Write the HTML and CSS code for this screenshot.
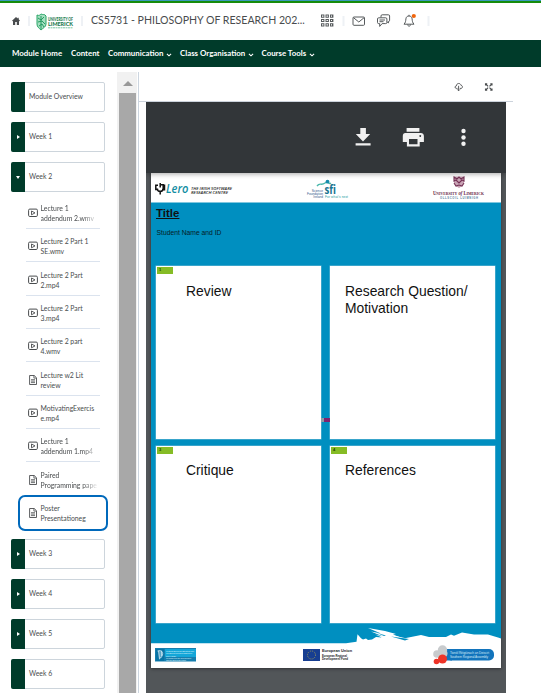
FILE: index.html
```html
<!DOCTYPE html>
<html lang="en">
<head>
<meta charset="utf-8">
<title>CS5731 - Philosophy of Research</title>
<link rel="stylesheet" href="styles.css">
</head>
<body>
<svg class="defs" width="0" height="0" aria-hidden="true">
  <symbol id="video" viewBox="0 0 10 10"><rect x=".6" y="1.1" width="8.8" height="7.4" rx="1.2" fill="none" stroke="#494c4e" stroke-width="1"/><path d="M3.5 3v3.8L7 4.9z" fill="none" stroke="#494c4e" stroke-width=".9"/></symbol>
  <symbol id="doc" viewBox="0 0 10 10"><path d="M1.6.5h4.6l2.3 2.3v6.7H1.6z" fill="none" stroke="#494c4e" stroke-width=".9"/><path d="M5.900.5v2.600h2.600M3 4.700h4M3 6.100h4M3 7.600h4" fill="none" stroke="#494c4e" stroke-width=".8"/></symbol>
  <symbol id="chev" viewBox="0 0 6 4"><path d="M.9.8 3 2.8 5.1.8" fill="none" stroke="#fff" stroke-width="1.1"/></symbol>
</svg>
<header class="topbar">
  <svg class="home" viewBox="0 0 8 8" width="8" height="8"><path d="M4 0 5.700 1.500V.8h1v1.500L8 3.700l-.6.5L7 3.900V8H4.800V5H3.200v3H1V3.900l-.4.3L0 3.700z" fill="#494c4e"/></svg>
  <i class="sep s1"></i>
  <svg class="crest" viewBox="0 0 38 18" width="38" height="18">
    <path d="M1 2c2 1 3 0 4-1 2 1 3 0 4 1l1 1v8c0 3-3 4-5 6-2-2-4-3-4-6z" fill="#a5dfc0" stroke="#29a566" stroke-width="1"/>
    <path d="M2 5l3 2 3-3M2 9l4-1 3 3M3 13l3-2 2 3M5 3v13" fill="none" stroke="#179457" stroke-width=".9"/>
    <text class="crest-text" x="12" y="7.500" font-size="4.600" textLength="25" lengthAdjust="spacingAndGlyphs">UNIVERSITY OF</text>
    <text class="crest-text" x="12" y="13.200" font-size="6.400" textLength="25" lengthAdjust="spacingAndGlyphs">LIMERICK</text>
    <path d="M12 14.800h25" stroke="#5bb98a" stroke-width=".8" stroke-dasharray="2 .5"/>
  </svg>
  <i class="sep s2"></i>
  <h1 class="course">CS5731 - PHILOSOPHY OF RESEARCH 202...</h1>
  <svg class="tools" viewBox="0 0 118 20" width="118" height="20" fill="none" stroke="#565a5c">
    <path d="M1 5.200h12.500M1 9.500h12.500M1 13.800h12.500" stroke-width="3.200" stroke-dasharray="3.400 1.100"/>
    <path d="M2 5.200h10M2 9.500h10M2 13.800h10" stroke="#fff" stroke-width="1.200" stroke-dasharray="1.400 3.100"/>
    <path d="M23.500 5v10M108.500 5v10" stroke="#eef1f5" stroke-width="2"/>
    <rect x="33" y="6" width="11.500" height="8.300" rx="1"/><path d="m33.500 6.700 5.300 4.300 5.300-4.300"/>
    <path d="M61 6.500V5c0-.8.4-1.200 1.200-1.200h6.200c.8 0 1.200.4 1.200 1.200v4.300c0 .8-.4 1.200-1.200 1.200v1.600l-1.400-1.400"/>
    <path d="M58.700 6.800h7c.8 0 1.200.4 1.200 1.200v3.400c0 .8-.4 1.200-1.200 1.200h-3.600l-2.400 2.800v-2.800h-1c-.8 0-1.200-.4-1.200-1.200V8c0-.8.4-1.200 1.200-1.200zM59.500 9h5.500M59.500 10.700h4"/>
    <path d="M84 13.200c1.600-1.600 1.700-3.400 1.900-5.300.2-1.800 1.200-2.900 3.100-2.900s2.900 1.100 3.100 2.900c.2 1.900.3 3.700 1.900 5.300zM87.700 13.500c0 2.200 2.800 2.200 2.800 0M89 5V3.800"/>
    <circle cx="93.800" cy="5" r="2.100" fill="#f0650c" stroke="none"/>
  </svg>
</header>
<nav class="nav">
  <a class="n1">Module Home</a><a class="n2">Content</a>
  <a class="n3">Communication</a><svg class="c1" width="6" height="4"><use href="#chev"/></svg>
  <a class="n4">Class Organisation</a><svg class="c2" width="6" height="4"><use href="#chev"/></svg>
  <a class="n5">Course Tools</a><svg class="c3" width="6" height="4"><use href="#chev"/></svg>
</nav>
<div class="layout">
  <aside class="side">
    <div class="mod"><b></b><span>Module Overview</span></div>
    <div class="mod"><b><i class="tri"></i></b><span>Week 1</span></div>
    <div class="mod"><b><i class="tri down"></i></b><span>Week 2</span></div>
    <ul class="topics">
      <li><svg width="10" height="10"><use href="#video"/></svg><span class="fade">Lecture 1<br>addendum 2.wmv</span></li>
      <li><svg width="10" height="10"><use href="#video"/></svg><span>Lecture 2 Part 1<br>SE.wmv</span></li>
      <li><svg width="10" height="10"><use href="#video"/></svg><span>Lecture 2 Part<br>2.mp4</span></li>
      <li><svg width="10" height="10"><use href="#video"/></svg><span>Lecture 2 Part<br>3.mp4</span></li>
      <li><svg width="10" height="10"><use href="#video"/></svg><span>Lecture 2 part<br>4.wmv</span></li>
      <li><svg width="10" height="10"><use href="#doc"/></svg><span>Lecture w2 Lit<br>review</span></li>
      <li><svg width="10" height="10"><use href="#video"/></svg><span>MotivatingExercis<br>e.mp4</span></li>
      <li><svg width="10" height="10"><use href="#video"/></svg><span class="fade">Lecture 1<br>addendum 1.mp4</span></li>
      <li class="last"><svg width="10" height="10"><use href="#doc"/></svg><span class="fade">Paired<br>Programming pape</span></li>
    </ul>
    <div class="selected"><svg width="10" height="10"><use href="#doc"/></svg><span>Poster<br>Presentationeg</span></div>
    <div class="mod"><b><i class="tri"></i></b><span>Week 3</span></div>
    <div class="mod"><b><i class="tri"></i></b><span>Week 4</span></div>
    <div class="mod"><b><i class="tri"></i></b><span>Week 5</span></div>
    <div class="mod"><b></b><span>Week 6</span></div>
  </aside>
  <div class="scroll"><i class="up"></i><div class="thumb"></div></div>
  <main class="content">
    <div class="actions">
      <svg viewBox="0 0 40 10" width="40" height="10" fill="none" stroke="#494c4e" stroke-width=".9">
        <path d="M3.500 6.400H2.400C.6 6.400.6 3.900 2.400 3.900 2.400.9 6.500.6 7 3.400c2 .1 1.800 3 0 3H5.800M4.600 3.800v4.800M3.200 7.400l1.400 1.400L6 7.400"/>
        <path d="M31.500 3.500V1.800h1.700M31.800 2l2.300 2.300M36.300 1.800H38v1.700M37.800 2l-2.300 2.300M31.500 6.500v1.700h1.700M31.800 8l2.300-2.300M38 6.500v1.700h-1.700M37.800 8l-2.300-2.300" stroke-width="1.100"/>
      </svg>
    </div>
    <section class="viewer">
      <div class="pdfbar">
        <svg viewBox="0 0 112 24" width="112" height="24" fill="#f1f1f1">
          <path d="M5.300 3h5.600v5.900h4.300L8 16.400.8 8.900h4.500zM.6 18.200h15v2.200H.6z"/>
          <path d="M51.600 3h12.800v3.800H51.600zM50.300 7.900h15.500c1.800 0 3.100 1.200 3.100 3v6.200h-4.200v4.400H51.900v-4.400h-4.100v-6.200c0-1.800 1-3 2.500-3zM54 13.900v5.400h8.500v-5.400zM65.200 10.100a.9.900 0 1 0 .1 0z" fill-rule="evenodd"/>
          <circle cx="108.500" cy="6" r="2.200"/><circle cx="108.500" cy="12.500" r="2.200"/><circle cx="108.500" cy="18.800" r="2.200"/>
        </svg>
      </div>
      <article class="page">
        <div class="logos">
          <svg viewBox="0 0 350 29" width="350" height="29">
            <path d="M8.500 11.800h3.700v3.500c0 2.200-1.300 3.200-3 3.200s-2.900-1-2.900-3M7 12.200H4.800v4.300h2.500M11.500 12.200h2v4.500h-2.500M9.200 10v4.500M9.200 17.500v4" fill="none" stroke="#111" stroke-width="1.500"/>
            <text x="15" y="20" class="lero" textLength="22.500" lengthAdjust="spacingAndGlyphs">Lero</text>
            <text x="40" y="16.600" class="cap" font-size="4" textLength="41" lengthAdjust="spacingAndGlyphs">THE IRISH SOFTWARE</text>
            <text x="40" y="20.600" class="cap" font-size="4" textLength="37" lengthAdjust="spacingAndGlyphs">RESEARCH CENTRE</text>
            <path d="M166 13c3-4 4 0 8-3s3 2 6 0" fill="none" stroke="#4ab8ac" stroke-width="1.400"/><circle cx="176.500" cy="8.700" r="1.900" fill="#168cab"/>
            <text x="173.500" y="21" class="sfi" textLength="11.500" lengthAdjust="spacingAndGlyphs">sfi</text>
            <text x="172" y="19" class="micro" text-anchor="end" fill="#30568b">Science</text>
            <text x="172" y="22" class="micro" text-anchor="end" fill="#30568b">Foundation</text>
            <text x="172" y="25" class="micro" text-anchor="end" fill="#30568b">Ireland</text>
            <text x="174" y="25" class="micro" fill="#229ba0" textLength="23">For what's next</text>
            <path d="M303 3.500h10v6c0 3-5 5.500-5 5.500s-5-2.500-5-5.500z" fill="#c9a3b5"/><path d="M303 4l3 2 2-2 2 2 3-2v4l-2-1-3 3-3-3-2 1zM303 10l2 3 3-1 3 1 2-3" fill="none" stroke="#743255" stroke-width="1.100"/>
            <text x="282" y="21.800" class="ul" textLength="51" lengthAdjust="spacingAndGlyphs">U<tspan font-size="4.500">NIVERSITY</tspan> <tspan font-style="italic">of</tspan> L<tspan font-size="4.500">IMERICK</tspan></text>
            <text x="289" y="26.200" class="olls" textLength="38">OLLSCOIL LUIMNIGH</text>
          </svg>
        </div>
        <div class="poster">
          <h2>Title</h2><p>Student Name and ID</p>
          <div class="cards">
            <section><i class="tag">1</i><h3>Review</h3></section>
            <section><i class="purple"></i><h3>Research Question/<br>Motivation</h3></section>
            <section><i class="tag">3</i><h3>Critique</h3></section>
            <section><i class="tag">4</i><h3>References</h3></section>
          </div>
        </div>
        <svg class="foot" viewBox="0 0 350 45" width="350" height="45">
          <path d="M0 20.300h195l10.500-1.500 1-7.500 3.500 4 2 1.300 3-1 2 1.300 4-.5 4-2.500 6 .5-7-3 8 2-12-5 10 2-13-5.500 17 3 11 3-3 .5 18 7-12-2 7-1.500 15-3 8 2h17l5-2.500 3 1.300 8-3.300 12 2h14l10 3 4 1.600V45H0z" fill="#fff"/>
          <path d="M231 13l10 4-1 1-10-3zM236 11l22 5-1 1-22-4z" fill="#fff"/>
          <path d="M226 10l9 2.500-2 .5zM240 13.500l14 4 4-1.500z" fill="#008fc0"/>
          <rect x="4" y="25" width="41" height="13.500" fill="#167eae"/><rect x="14" y="26" width="31" height="8" fill="#14a6d8"/><rect x="5" y="26" width="8" height="12" fill="#0873a4"/><path d="M6.500 28c6-2 7 4 2 8l-1-8M9 28v7M10.500 28v5" fill="none" stroke="#d9edf7" stroke-width=".8"/>
          <text x="15" y="28.500" class="tiny" textLength="28">Ireland's European Structural and</text><text x="15" y="31" class="tiny" textLength="26">Investment Funds Programmes</text><text x="15" y="33.500" class="tiny" textLength="10">2014-2020</text><text x="15" y="36" class="tiny" textLength="25">Co-funded by the Government</text><text x="15" y="38" class="tiny" textLength="20">and the European Union</text>
          <rect x="152" y="26" width="17" height="12" fill="#173e91"/><circle cx="160.500" cy="32" r="4" fill="none" stroke="#b0a64f" stroke-width=".9" stroke-dasharray=".9 1.190"/>
          <text x="171" y="29.300" class="eu" font-size="4" textLength="30" lengthAdjust="spacingAndGlyphs">European Union</text><text x="171" y="33.500" class="eu" font-size="3.300" textLength="25" lengthAdjust="spacingAndGlyphs">European Regional</text><text x="171" y="37.300" class="eu" font-size="3.300" textLength="26" lengthAdjust="spacingAndGlyphs">Development Fund</text>
          <rect x="295" y="26" width="48" height="11.500" rx="5" fill="#1274bc"/><path d="M295 26h6v11.500h-6z" fill="#1274bc"/><g fill="#c8cbcd"><circle cx="291.500" cy="27" r="4.700"/><circle cx="286" cy="31" r="3.800"/><circle cx="293" cy="30.500" r="3.500"/></g><g fill="#ee3428"><circle cx="291.500" cy="36" r="4.500"/><circle cx="285.500" cy="38.500" r="2.800"/></g>
          <text x="299" y="30.800" class="asm" textLength="39">Tionól Réigiúnach an Deiscirt</text><text x="299" y="34.500" class="asm" textLength="38">Southern Regional Assembly</text>
        </svg>
      </article>
    </section>
  </main>
</div>
</body>
</html>
```

FILE: styles.css
```css
* { box-sizing: border-box; }
body { margin: 0; width: 541px; height: 693px; overflow: hidden; background: #fff; font-family: Lato, sans-serif; color: #494c4e; }
.defs { position: absolute; }
.topbar { height: 40px; border-top: 3px solid #168c0b; display: flex; align-items: flex-start; position: relative; }
.topbar::before { content: ""; position: absolute; top: -3px; left: 0; right: 0; height: 1px; background: #3a99bb; }
.home { margin: 14px 0 0 12px; }
.sep { width: 2px; height: 10px; background: #eef1f5; margin-top: 13px; }
.s1 { margin-left: 8px; }
.crest { margin: 10px 0 0 6px; overflow: visible; }
.s2 { margin-left: 7px; }
.crest-text { font-family: Lato, sans-serif; font-weight: 900; fill: #19794d; }
.course { margin: 9px 0 0 8px; width: 229px; font-size: 10.570px; line-height: 17px; font-weight: 400; white-space: nowrap; }
.tools { margin-top: 8px; flex: none; }
.nav { height: 27px; background: #003b2a; display: flex; align-items: center; color: #fff; font-weight: 700; font-size: 7.880px; white-space: nowrap; padding: 0 0 1px 12px; }
.nav a { flex: none; line-height: 12px; }
.n1 { width: 59px; } .n2 { width: 37px; } .n3 { width: 58px; } .n4 { width: 67.500px; } .n5 { width: 47px; }
.nav svg { margin-top: 3px; flex: none; }
.c1, .c2 { margin-right: 8px; }
.layout { display: flex; height: 626px; }
.side { width: 117px; padding: 15px 0 0 11px; font-size: 6.850px; flex: none; }
.mod { width: 94px; height: 30px; border: 1px solid #cdd5dc; border-radius: 2px; margin-bottom: 10px; display: flex; align-items: center; }
.mod b { width: 14px; height: 30px; margin-left: -1px; background: #003b2a; border-radius: 2px 0 0 2px; display: grid; place-items: center; flex: none; }
.mod span { margin-left: 4px; line-height: 10px; padding-bottom: 2px; }
.tri { border: 2px solid transparent; border-left: 3px solid #fff; border-right: 0; }
.tri.down { border: 2px solid transparent; border-top: 3px solid #fff; border-bottom: 0; }
.topics { list-style: none; margin: -6.500px 0 0 15px; padding: 0; width: 74px; }
.topics li { height: 33.350px; border-bottom: 1px solid #dbe3ee; display: flex; align-items: center; padding: 2.500px 0 0 2px; line-height: 10px; white-space: nowrap; }
.topics li.last { border: 0; }
.topics svg, .selected svg { flex: none; margin-right: 2.500px; }
.fade { -webkit-mask-image: linear-gradient(90deg, #000 42px, rgba(0,0,0,.15) 55px); mask-image: linear-gradient(90deg, #000 42px, rgba(0,0,0,.15) 55px); }
.selected { width: 90px; height: 36px; border: 2px solid #0069bb; border-radius: 7px; margin: -.650px 0 8.500px 7px; display: flex; align-items: center; padding: 1px 0 0 8px; line-height: 10px; }
.scroll { width: 20px; margin-top: 5px; background: #f1f1f1; padding: 9px 1px 0 2px; flex: none; }
.up { display: block; width: 0; margin-left: 4px; border: 5px solid transparent; border-bottom-color: #989898; border-top: 0; }
.thumb { height: 620px; margin-top: 7px; background: #a8a8a8; }
.content { width: 403px; margin: 5px 0 0 1px; border-left: 1px solid #ccd5df; }
.actions { width: 374px; height: 30px; border-bottom: 1px solid #ccd3dc; padding: 10px 0 0 315px; }
.actions svg { display: block; }
.viewer { margin-left: 7px; width: 360px; height: 591px; background: #525659; }
.pdfbar { height: 71px; background: #323639; padding: 23px 0 0 209px; position: relative; box-shadow: 0 1px 5px rgba(0,0,0,.35); clip-path: inset(0 0 -6px 0); }
.page { width: 350px; height: 495px; margin-left: 5px; background: #fff; box-shadow: 0 1px 3px #303335; font-family: "Liberation Sans", sans-serif; color: #111; display: flex; flex-direction: column; }
.logos { height: 29px; }
.poster { height: 421px; background: #008fc0; border-top: 1px solid #80c7df; padding: 4px 5px 0; flex: none; }
.poster h2 { margin: 0; font-size: 11.500px; line-height: 12px; text-decoration: underline; }
.poster p { margin: 9px 0 0 .500px; font-size: 6.750px; line-height: 9px; color: #061c26; }
.cards { display: grid; grid-template-columns: 165px 165px; grid-template-rows: 173px 177px; gap: 7px 9px; margin-top: 29px; }
.cards section { position: relative; background: #fff; box-shadow: 0 0 0 .500px #73bcd6; }
.cards h3 { font-size: 13.860px; font-weight: 400; line-height: 17px; margin: 17px 0 0 30px; }
.cards section:nth-child(n+3) h3 { margin-top: 16px; }
.cards section:nth-child(even) h3 { margin-left: 15px; }
.tag { position: absolute; left: 1px; top: 1px; width: 16px; height: 7px; background: #86bc25; font: 700 4px/6px "Liberation Sans"; padding-left: 2px; color: #224000; }
.purple { position: absolute; left: -9px; top: 152px; width: 9px; height: 4px; background: #80236f; border-left: 3px solid #8e9ca5; }
.foot { background: #008fc0; flex: none; }
.lero { font: italic 600 13px "Open Sans"; fill: #128da2; }
.cap { font-family: "Open Sans"; font-style: italic; font-weight: 600; fill: #222; }
.sfi { font: 700 13px "Open Sans"; fill: #17738f; }
.micro { font-size: 3.200px; }
.ul { font: 700 5.500px "Liberation Serif"; fill: #682545; }
.olls { font: 700 2.700px "Liberation Sans"; fill: #557c9d; }
.tiny { font-size: 2.200px; fill: #d9f1fa; }
.eu { font-weight: 700; fill: #17191d; }
.asm { font-size: 3.100px; fill: #d3e9f7; }
```
